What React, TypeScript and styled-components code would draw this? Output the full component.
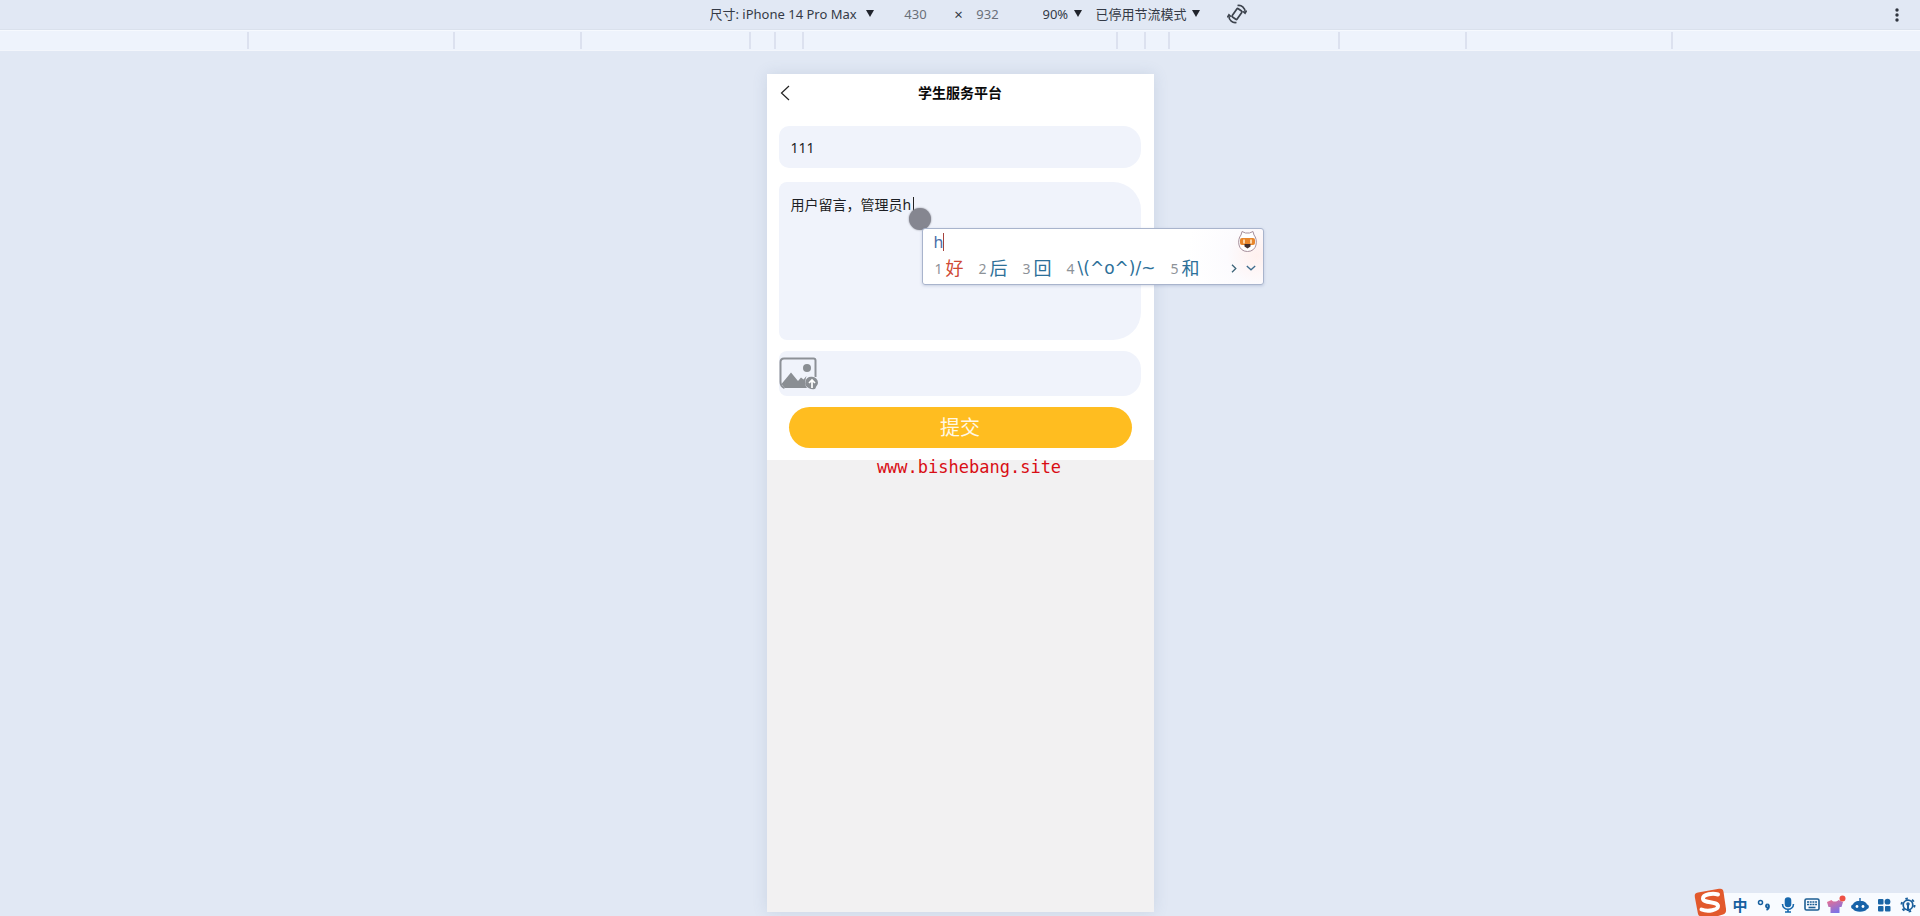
import React, { useState } from "react";
import styled, { createGlobalStyle } from "styled-components";

const ui = `"Noto Sans", "Noto Sans CJK SC", sans-serif`;

const GlobalStyle = createGlobalStyle`
  *, *::before, *::after { box-sizing: border-box; }
  html, body { margin: 0; padding: 0; }
  body { font-family: ${ui}; background: #e1e8f4; overflow: hidden; }
  button, input, textarea, select { font: inherit; color: inherit; border: 0; outline: 0; margin: 0; padding: 0; background: none; }
`;

const Page = styled.div`
  position: relative;
  min-height: 100vh;
  display: flex;
  flex-direction: column;
  background: #e1e8f4;
`;

const Toolbar = styled.header`
  height: 30px;
  display: grid;
  grid-template-columns: 1fr auto 1fr;
  align-items: center;
  padding-left: 36px;
  border-bottom: 1px solid #dae1ec;
  font-size: 13px;
  color: #343a46;
`;

const ToolGroup = styled.div`
  grid-column: 2;
  display: flex;
  align-items: center;
  padding-bottom: 2px;
`;

const Picker = styled.label<{ $width: number }>`
  display: flex;
  align-items: center;
  justify-content: space-between;
  width: ${(p) => p.$width}px;
  select {
    appearance: none;
    flex: 1;
    min-width: 0;
    height: 20px;
    line-height: 20px;
  }
`;

const Caret = styled.svg`
  width: 8px;
  height: 7px;
  flex: none;
  fill: #20242c;
`;

const SizeFields = styled.div`
  display: flex;
  align-items: center;
  margin: 0 37px 0 24px;
`;

const SizeInput = styled.input`
  width: 36px;
  height: 20px;
  text-align: center;
  color: #6a7079;
`;

const Times = styled.span`
  width: 36px;
  padding-left: 14px;
  text-align: center;
  font-size: 15px;
  line-height: 20px;
`;

const Throttling = styled.div`
  display: flex;
  margin: 0 27px 0 14px;
`;

const IconButton = styled.button`
  display: flex;
  align-items: center;
  justify-content: center;
  width: 20px;
  height: 20px;
`;

const MenuButton = styled(IconButton)`
  justify-self: end;
  margin-right: 13px;
`;

const Ruler = styled.div`
  height: 21px;
  display: flex;
  background: #eef3fc;
  border-top: 1px solid #f6f9fe;
  border-bottom: 1px solid #f3f6fc;
`;

const Segment = styled.div<{ $width?: number }>`
  flex: ${(p) => (p.$width ? `0 0 ${p.$width}px` : "1")};
  margin: 1px 0;
  & + & { border-left: 2px solid #dce1ef; }
`;

const Stage = styled.main`
  flex: 1;
  display: flex;
  justify-content: center;
  padding: 23px 0 4px;
`;

const Phone = styled.section`
  width: 387px;
  display: flex;
  flex-direction: column;
  background: #f2f1f2;
  box-shadow: 0 0 14px rgba(90, 110, 150, 0.16);
`;

const Sheet = styled.div`
  background: #fff;
  padding-bottom: 12px;
`;

const NavBar = styled.div`
  display: grid;
  grid-template-columns: 32px 1fr 32px;
  align-items: center;
  justify-items: center;
  height: 38px;
`;

const BackButton = styled(IconButton)`
  justify-self: end;
  margin-right: 4px;
`;

const Title = styled.h1`
  margin: 0;
  font-size: 14px;
  line-height: 20px;
  font-weight: 700;
  color: #0a0a0a;
`;

const Form = styled.form`
  display: flex;
  flex-direction: column;
  padding: 14px 13px 0 12px;
`;

const field = `
  width: 100%;
  background: #f0f3fb;
  font-size: 14px;
  color: #1c1e24;
`;

const TextField = styled.input`
  && {
    ${field}
    height: 42px;
    padding: 0 12px;
    border-radius: 10px 18px 18px 10px;
  }
`;

const MessageWrap = styled.div`
  position: relative;
  margin: 14px 0 11px;
`;

const Message = styled.textarea`
  && {
    ${field}
    display: block;
    height: 158px;
    padding: 13px 12px;
    line-height: 20px;
    resize: none;
    border-radius: 8px 28px 28px 8px;
  }
`;

const Upload = styled.label`
  display: flex;
  align-items: center;
  height: 45px;
  background: #f0f3fb;
  border-radius: 8px 18px 18px 8px;
  input { display: none; }
`;

const Submit = styled.button`
  && {
    height: 41px;
    margin: 11px 9px 0 10px;
    border-radius: 21px;
    background: #ffbd20;
    color: #fff8e6;
    font-size: 20px;
    line-height: 41px;
  }
`;

const SiteLink = styled.a`
  align-self: center;
  margin: -3px 0 0 18px;
  font: 17px/20px "DejaVu Sans Mono", monospace;
  color: #d90d14;
  text-decoration: none;
`;

const TextCaret = styled.i`
  position: absolute;
  left: 134px;
  top: 15px;
  width: 1px;
  height: 16px;
  background: #222;
`;

const Pointer = styled.div`
  position: absolute;
  left: 130px;
  top: 26px;
  width: 22px;
  height: 22px;
  border-radius: 50%;
  background: #858690;
  box-shadow: 0 0 2px #858690;
`;

const ImePanel = styled.div`
  position: absolute;
  left: 143px;
  top: 46px;
  width: 342px;
  height: 57px;
  border: 1px solid #a9b4cc;
  border-radius: 3px;
  background: radial-gradient(circle at 334px 26px, #fff0ee, #fcfbfe 30px, #fff 70px);
  box-shadow: 0 1px 3px rgba(80, 100, 150, 0.25);
  z-index: 1;
`;

const ImeTop = styled.div`
  display: flex;
  justify-content: space-between;
  align-items: center;
  height: 25px;
  padding: 0 5px 0 11px;
`;

const Typed = styled.span`
  border-right: 1px solid #a5433d;
  line-height: 18px;
  font-size: 16px;
  color: #4a6fa8;
`;

const Candidates = styled.div`
  display: flex;
  align-items: center;
  height: 28px;
  padding: 0 7px 0 12px;
`;

const Candidate = styled.button<{ $first?: boolean; $wide?: boolean }>`
  && {
    display: flex;
    align-items: center;
    gap: 3px;
    margin-right: 15px;
    font-family: ${(p) => (p.$wide ? `"DejaVu Sans", sans-serif` : ui)};
    line-height: 24px;
    font-size: ${(p) => (p.$wide ? 17 : 18)}px;
    white-space: nowrap;
    color: ${(p) => (p.$first ? "#cf4a35" : "#2d7099")};
  }
  small { font: 14px ${ui}; color: #8d9298; }
`;

const Pager = styled.div`
  display: flex;
  align-items: center;
  gap: 9px;
  margin-left: auto;
`;

const PagerButton = styled.button`
  display: flex;
`;

const ImeBar = styled.div`
  position: absolute;
  right: 0;
  bottom: 0;
  display: flex;
  align-items: center;
  height: 23px;
  padding-left: 34px;
  background: linear-gradient(90deg, transparent 20px, #f8fbff 20px);
`;

const ImeButton = styled(IconButton)`
  && { width: 24px; height: 22px; font-size: 15px; line-height: 20px; font-weight: 700; color: #17609f; }
`;

const LogoButton = styled(IconButton)`
  && { position: absolute; left: 0; bottom: 0; width: 33px; height: 28px; }
`;

const Down = () => (
  <Caret viewBox="0 0 8 7"><path d="M0 0h8L4 7z" /></Caret>
);

const RotateIcon = () => (
  <svg width="20" height="20" viewBox="0 0 20 20" fill="none" stroke="#3c424c" strokeWidth="1.7">
    <rect x="7" y="5" width="6" height="10" rx="1" transform="rotate(35 10 10)" />
    <path d="M10.500 1.500c4-.8 7.500 2 7.700 6.800M9.500 18.500c-4 .8-7.500-2-7.700-6.800" />
    <path d="m15.800 7.200 2.300 2.300 1.700-2.800M4.200 12.800 1.900 10.500.2 13.300" strokeWidth="1.300" />
  </svg>
);

const PictureIcon = () => (
  <svg width="40" height="34" viewBox="0 0 40 34">
    <path d="M5 1.500h29.500a2 2 0 0 1 2 2V20M5 1.500C2.500 1.500 1.500 3 1.500 5v20c0 3 1.500 5 4 6" fill="none" stroke="#8d9197" strokeWidth="2" />
    <path d="M2.500 27 12 15.500 19 24l3-3.500 2.500 2 3-3.500c-1.500 4-1.500 8 .5 12H6z" fill="#8a8e93" />
    <circle cx="28" cy="11" r="4" fill="#8a8e93" />
    <circle cx="33" cy="26" r="6.800" fill="#f0f3fb" />
    <path d="M33 19.800a6 6 0 0 1 6 6c0 2.500-2 3.200-2.500 5.500-.6 1.300-4 1.500-6.500 0a6 6 0 0 1 3-11.500z" fill="#8a8e93" />
    <path d="M33 31v-8m-3 3 3-3 3 3" fill="none" stroke="#fff" strokeWidth="1.700" />
  </svg>
);

const Mascot = () => (
  <svg width="21" height="23" viewBox="0 0 21 23">
    <path d="M4 5 5 1.500 8.500 3h4L16 1.500 17 5c4 4.500 3.500 16.500-6.500 16.500S0 9.500 4 5z" fill="#fff" stroke="#a68f9c" />
    <rect x="3" y="8" width="15" height="7" rx="2" fill="#e8862c" />
    <rect x="6" y="9.500" width="2" height="4" fill="#fbd6a8" /><rect x="13" y="9.500" width="2" height="4" fill="#fbd6a8" />
    <path d="M7.500 14h6v2.500l-3 2-3-2z" fill="#41302f" />
  </svg>
);

const SogouLogo = () => (
  <svg width="33" height="28" viewBox="0 0 33 28">
    <path d="M4 4.500 25 .800c3-.5 4 .5 4.500 3L32 21c.4 3-.5 4.500-3 5.500L24 28H5.500C4.500 27.500 4 26 3.800 25L.800 9C.400 6 1.500 5 4 4.500z" fill="#e2592c" />
    <path d="M24 6.500c-5-1.500-15-.5-15 4 0 5 14.500 2.500 15 7.500.3 4-10 6-16.500 3.500" fill="none" stroke="#fff" strokeWidth="4" strokeLinecap="round" />
  </svg>
);

const imeTools: { label: string; icon: React.ReactNode }[] = [
  {
    label: "标点",
    icon: (
      <svg width="14" height="14" viewBox="0 0 14 14" fill="none" stroke="#17609f">
        <circle cx="3.500" cy="4.500" r="2" strokeWidth="1.500" />
        <path d="M10.500 6.500a1.500 1.500 0 1 1-.1 0M12 8c0 2-.8 3.300-2.500 4" strokeWidth="1.800" />
      </svg>
    ),
  },
  {
    label: "语音",
    icon: (
      <svg width="14" height="16" viewBox="0 0 14 16" fill="none" stroke="#1768ad" strokeWidth="1.600">
        <rect x="4.500" y="1" width="5" height="8.500" rx="2.500" fill="#1768ad" />
        <path d="M1.500 7c.2 7 10.800 7 11 0M7 12.500V15M4 15h6" />
      </svg>
    ),
  },
  {
    label: "键盘",
    icon: (
      <svg width="16" height="13" viewBox="0 0 16 13" fill="none" stroke="#1d5f94">
        <rect x="1" y="1" width="14" height="11" rx="1.500" strokeWidth="1.600" />
        <path d="M3 4h10M3 6.500h10" strokeWidth="1.600" strokeDasharray="2 .7" />
        <path d="M4.500 9.500h7" strokeWidth="1.600" />
      </svg>
    ),
  },
  {
    label: "皮肤",
    icon: (
      <svg width="20" height="19" viewBox="0 0 20 19">
        <defs>
          <linearGradient id="skin" x1="0" y1="0" x2=".5" y2="1">
            <stop offset="0" stopColor="#ee6f8c" /><stop offset="1" stopColor="#7d72e6" />
          </linearGradient>
        </defs>
        <path d="M5.500 5c1.500 2 5 2 7 0l4.500 2-1.500 5h-2v6h-9v-6h-2L1 7z" fill="url(#skin)" />
        <circle cx="16.500" cy="3.500" r="3" fill="#ee5145" />
      </svg>
    ),
  },
  {
    label: "助手",
    icon: (
      <svg width="18" height="14" viewBox="0 0 18 14">
        <path d="M8.300 0h1.400v3C14 3 15.500 5 16 6.500c2.500 0 2.500 4.500 0 4.500-1.500 3.500-12.500 3.500-14 0-2.500 0-2.500-4.500 0-4.500C2.500 5 4 3 8.300 3z" fill="#1762a8" />
        <circle cx="6" cy="8.500" r="1.400" fill="#fff" /><circle cx="12" cy="8.500" r="1.400" fill="#fff" />
      </svg>
    ),
  },
  {
    label: "工具箱",
    icon: (
      <svg width="14" height="14" viewBox="0 0 14 14" fill="#1a65a6">
        <rect x="1" y="1" width="5.500" height="5.500" rx="1" /><circle cx="10.500" cy="3.700" r="2.900" />
        <rect x="1" y="8" width="5.500" height="5.500" rx="1" /><rect x="8" y="8" width="5.500" height="5.500" rx="1" />
      </svg>
    ),
  },
  {
    label: "设置",
    icon: (
      <svg width="16" height="16" viewBox="0 0 16 16" fill="none" stroke="#1a5f9c">
        <circle cx="8" cy="8" r="4.800" strokeWidth="1.700" />
        <circle cx="8" cy="8" r="6.500" strokeWidth="2" strokeDasharray="2.500 4.300" />
        <path d="M8 7v7" strokeWidth="2" /><circle cx="8" cy="7" r="1" strokeWidth="1.500" />
      </svg>
    ),
  },
];

const segments = [206, 127, 169, 25, 28, 314, 28, 24, 170, 127, 206];
const candidates = ["好", "后", "回", "\\(^o^)/~", "和"];

export default function App() {
  const [name, setName] = useState("111");
  const [message, setMessage] = useState("用户留言，管理员h");

  return (
    <Page>
      <GlobalStyle />
      <Toolbar>
        <ToolGroup>
          <Picker $width={164}>
            <select aria-label="尺寸"><option>尺寸: iPhone 14 Pro Max</option></select>
            <Down />
          </Picker>
          <SizeFields>
            <SizeInput aria-label="宽度" defaultValue="430" />
            <Times>×</Times>
            <SizeInput aria-label="高度" defaultValue="932" />
          </SizeFields>
          <Picker $width={39}>
            <select aria-label="缩放"><option>90%</option></select>
            <Down />
          </Picker>
          <Throttling>
            <Picker $width={104}>
              <select aria-label="节流"><option>已停用节流模式</option></select>
              <Down />
            </Picker>
          </Throttling>
          <IconButton aria-label="旋转"><RotateIcon /></IconButton>
        </ToolGroup>
        <MenuButton aria-label="更多">
          <svg width="4" height="16" viewBox="0 0 4 16" fill="#30353f">
            <circle cx="2" cy="3" r="1.700" /><circle cx="2" cy="8" r="1.700" /><circle cx="2" cy="13" r="1.700" />
          </svg>
        </MenuButton>
      </Toolbar>
      <Ruler>
        <Segment />
        {segments.map((w, i) => <Segment key={i} $width={w} />)}
        <Segment />
      </Ruler>
      <Stage>
        <Phone>
          <Sheet>
            <NavBar>
              <BackButton aria-label="返回">
                <svg width="10" height="16" viewBox="0 0 10 16" fill="none" stroke="#222" strokeWidth="1.200"><path d="M9 1 1.500 8 9 15" /></svg>
              </BackButton>
              <Title>学生服务平台</Title>
            </NavBar>
            <Form onSubmit={(e) => e.preventDefault()}>
              <TextField aria-label="标题" value={name} onChange={(e) => setName(e.target.value)} />
              <MessageWrap>
                <Message aria-label="留言" value={message} onChange={(e) => setMessage(e.target.value)} />
                <TextCaret />
                <Pointer />
                <ImePanel>
                  <ImeTop><Typed>h</Typed><Mascot /></ImeTop>
                  <Candidates>
                    {candidates.map((c, i) => (
                      <Candidate key={c} type="button" $first={i === 0} $wide={c.length > 1}>
                        <small>{i + 1}</small>{c}
                      </Candidate>
                    ))}
                    <Pager>
                      <PagerButton type="button" aria-label="下一页">
                        <svg width="6" height="9" viewBox="0 0 6 9" fill="none" stroke="#3d6478" strokeWidth="1.300"><path d="m1 .800 3.800 3.700L1 8.200" /></svg>
                      </PagerButton>
                      <PagerButton type="button" aria-label="展开">
                        <svg width="10" height="6" viewBox="0 0 10 6" fill="none" stroke="#3d6c8e" strokeWidth="1.300"><path d="m.800 1 4.200 3.800L9.200 1" /></svg>
                      </PagerButton>
                    </Pager>
                  </Candidates>
                </ImePanel>
              </MessageWrap>
              <Upload><input type="file" aria-label="图片" /><PictureIcon /></Upload>
              <Submit>提交</Submit>
            </Form>
          </Sheet>
          <SiteLink href="#">www.bishebang.site</SiteLink>
        </Phone>
      </Stage>
      <ImeBar>
        <LogoButton aria-label="输入法"><SogouLogo /></LogoButton>
        <ImeButton>中</ImeButton>
        {imeTools.map((t) => <ImeButton key={t.label} aria-label={t.label}>{t.icon}</ImeButton>)}
      </ImeBar>
    </Page>
  );
}
